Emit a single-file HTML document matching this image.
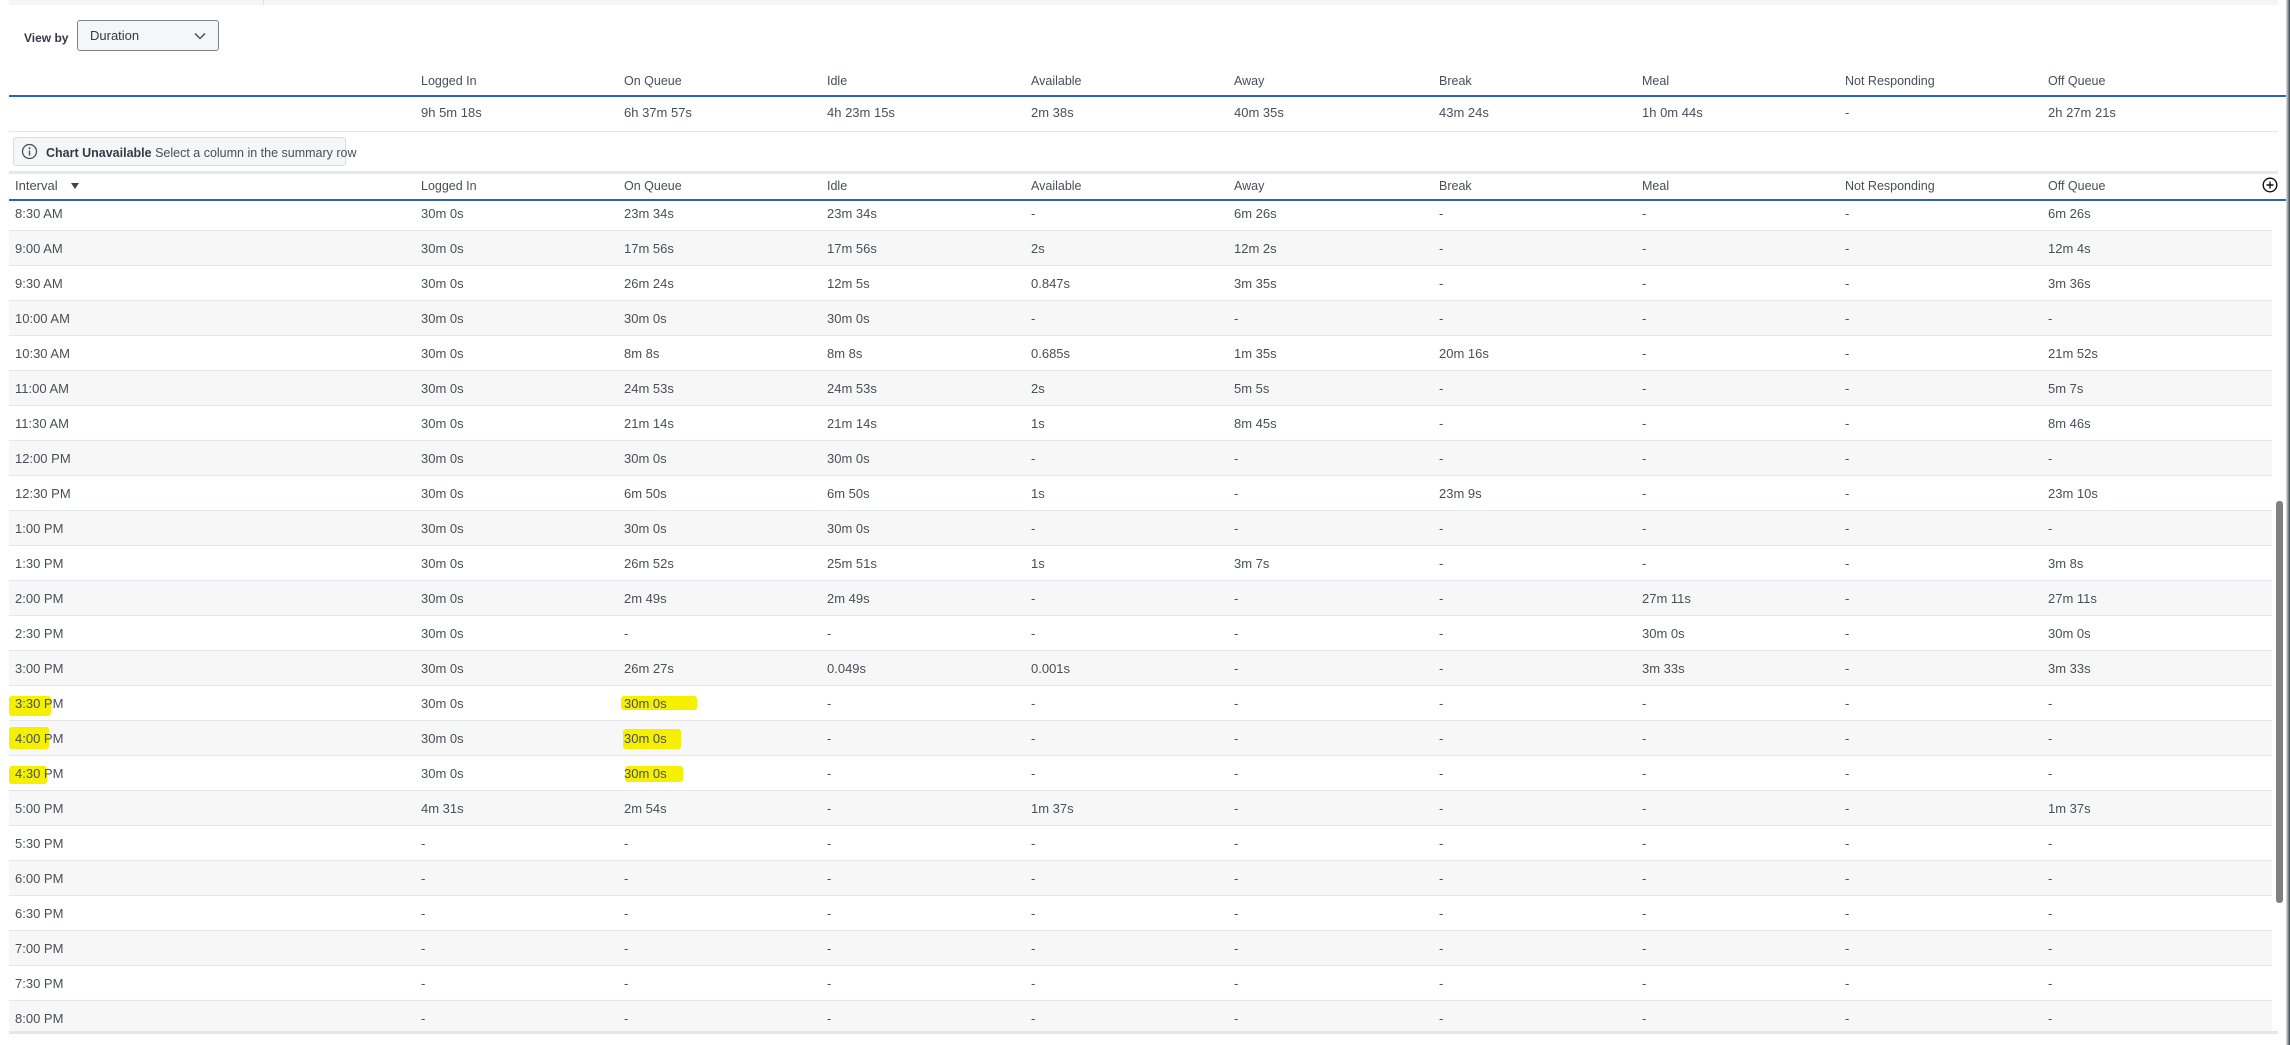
<!DOCTYPE html>
<html><head><meta charset="utf-8"><style>
*{margin:0;padding:0;box-sizing:border-box}
html,body{width:2290px;height:1045px;overflow:hidden;background:#fff;font-family:"Liberation Sans",Arial,sans-serif;color:#4a4e57;font-size:13px}
.abs{position:absolute}
.t{position:absolute;white-space:nowrap;line-height:16px}
.row{position:absolute;left:9px;width:2263px;height:35px;border-bottom:1px solid #e3e6eb}
.row.g{background:#f7f7f7}
.row span{position:absolute;top:10px;white-space:nowrap}
.hl{position:absolute;background:#f5f000;}
</style></head><body>
<div class="abs" style="left:9px;top:0;width:2269px;height:5px;background:#f5f6f7"></div>
<div class="abs" style="left:263px;top:0;width:1px;height:5px;background:#dcdfe3"></div>
<div class="t" style="left:24px;top:30px;font-weight:bold;font-size:12px;color:#333a47">View by</div>
<div class="abs" style="left:77px;top:20px;width:142px;height:31px;border:1px solid #7c818a;border-radius:3px;background:#f5f6f8"></div>
<div class="t" style="left:90px;top:28px;color:#333a47">Duration</div>
<svg class="abs" style="left:194px;top:32px" width="12" height="8" viewBox="0 0 12 8"><path d="M1 1.5 6 6.5 11 1.5" fill="none" stroke="#444" stroke-width="1.3"/></svg>

<div id="sh"></div>
<div class="abs" style="left:9px;top:95px;width:2278px;height:2px;background:#2a60c8"></div>
<div class="abs" style="left:9px;top:131px;width:2269px;height:1px;background:#e3e6eb"></div>
<div class="abs" style="left:13px;top:137px;width:333px;height:29px;border:1px solid #d9dde3;border-radius:3px;background:#f5f6f8"></div>
<svg class="abs" style="left:21px;top:143px" width="17" height="17" viewBox="0 0 17 17"><circle cx="8.5" cy="8.5" r="7" fill="none" stroke="#4a4e57" stroke-width="1.3"/><circle cx="8.5" cy="5.2" r="1" fill="#4a4e57"/><path d="M8.5 7.5v5" stroke="#4a4e57" stroke-width="1.4"/></svg>
<div class="t" style="left:46px;top:145px;font-size:12.5px"><b style="color:#333a47">Chart Unavailable</b> Select a column in the summary row</div>
<div class="abs" style="left:9px;top:171px;width:2269px;height:3px;background:#e6e8ec"></div>
<div class="t" style="left:15px;top:178px">Interval</div>
<svg class="abs" style="left:71px;top:183px" width="8" height="6"><path d="M0 0h8L4 6z" fill="#444"/></svg>
<svg class="abs" style="left:2262px;top:177px" width="16" height="16" viewBox="0 0 16 16"><circle cx="8" cy="8" r="6.8" fill="none" stroke="#111" stroke-width="1.4"/><path d="M8 4.5v7M4.5 8h7" stroke="#111" stroke-width="1.4"/></svg>
<div id="hh"></div>

<div class="abs" style="left:0;top:201px;width:2278px;height:830px;overflow:hidden">
<div id="rows" class="abs" style="left:0;top:-5px;width:2278px"></div>
</div>
<div class="abs" style="left:9px;top:199px;width:2278px;height:2px;background:#2a60c8"></div>
<div class="abs" style="left:9px;top:1031px;width:2269px;height:3px;background:#e3e6eb"></div>
<div class="abs" style="left:2276px;top:501px;width:7px;height:402px;border-radius:3px;background:#808080"></div>
<div class="abs" style="left:2286px;top:0;width:4px;height:1045px;background:linear-gradient(90deg,#e6e6e6,#3a4550)"></div>

<script>
var cols=[421,624,827,1031,1234,1439,1642,1845,2048];
var heads=["Logged In","On Queue","Idle","Available","Away","Break","Meal","Not Responding","Off Queue"];
var sum=["9h 5m 18s","6h 37m 57s","4h 23m 15s","2m 38s","40m 35s","43m 24s","1h 0m 44s","-","2h 27m 21s"];
var h1="",h2="";
for(var i=0;i<9;i++){
h1+='<div class="t" style="left:'+cols[i]+'px;top:73px;font-size:12.5px">'+heads[i]+'</div>';
h1+='<div class="t" style="left:'+cols[i]+'px;top:105px">'+sum[i]+'</div>';
h2+='<div class="t" style="left:'+cols[i]+'px;top:178px;font-size:12.5px">'+heads[i]+'</div>';
}
document.getElementById('sh').outerHTML=h1;
document.getElementById('hh').outerHTML=h2;
var d=[
["8:30 AM","30m 0s","23m 34s","23m 34s","-","6m 26s","-","-","-","6m 26s"],
["9:00 AM","30m 0s","17m 56s","17m 56s","2s","12m 2s","-","-","-","12m 4s"],
["9:30 AM","30m 0s","26m 24s","12m 5s","0.847s","3m 35s","-","-","-","3m 36s"],
["10:00 AM","30m 0s","30m 0s","30m 0s","-","-","-","-","-","-"],
["10:30 AM","30m 0s","8m 8s","8m 8s","0.685s","1m 35s","20m 16s","-","-","21m 52s"],
["11:00 AM","30m 0s","24m 53s","24m 53s","2s","5m 5s","-","-","-","5m 7s"],
["11:30 AM","30m 0s","21m 14s","21m 14s","1s","8m 45s","-","-","-","8m 46s"],
["12:00 PM","30m 0s","30m 0s","30m 0s","-","-","-","-","-","-"],
["12:30 PM","30m 0s","6m 50s","6m 50s","1s","-","23m 9s","-","-","23m 10s"],
["1:00 PM","30m 0s","30m 0s","30m 0s","-","-","-","-","-","-"],
["1:30 PM","30m 0s","26m 52s","25m 51s","1s","3m 7s","-","-","-","3m 8s"],
["2:00 PM","30m 0s","2m 49s","2m 49s","-","-","-","27m 11s","-","27m 11s"],
["2:30 PM","30m 0s","-","-","-","-","-","30m 0s","-","30m 0s"],
["3:00 PM","30m 0s","26m 27s","0.049s","0.001s","-","-","3m 33s","-","3m 33s"],
["3:30 PM","30m 0s","30m 0s","-","-","-","-","-","-","-"],
["4:00 PM","30m 0s","30m 0s","-","-","-","-","-","-","-"],
["4:30 PM","30m 0s","30m 0s","-","-","-","-","-","-","-"],
["5:00 PM","4m 31s","2m 54s","-","1m 37s","-","-","-","-","1m 37s"]];
var t=["5:30 PM","6:00 PM","6:30 PM","7:00 PM","7:30 PM","8:00 PM"];
for(var k=0;k<t.length;k++)d.push([t[k],"-","-","-","-","-","-","-","-","-"]);
var xs=[15].concat(cols),s="";
var hls={14:[[0,10,42,20],[612,10,76,14]],15:[[0,6,40,22],[614,8,58,20]],16:[[0,10,38,18],[616,10,58,16]]};
for(var r=0;r<d.length;r++){
s+='<div class="row'+(r%2?' g':'')+'" style="top:'+(r*35)+'px">';
if(hls[r])hls[r].forEach(function(h){s+='<div class="hl" style="left:'+h[0]+'px;top:'+h[1]+'px;width:'+h[2]+'px;height:'+h[3]+'px;border-radius:3px"></div>'});
for(var c=0;c<10;c++)s+='<span style="left:'+(xs[c]-9)+'px">'+d[r][c]+'</span>';
s+='</div>';
}
document.getElementById('rows').innerHTML=s;
</script>
</body></html>
